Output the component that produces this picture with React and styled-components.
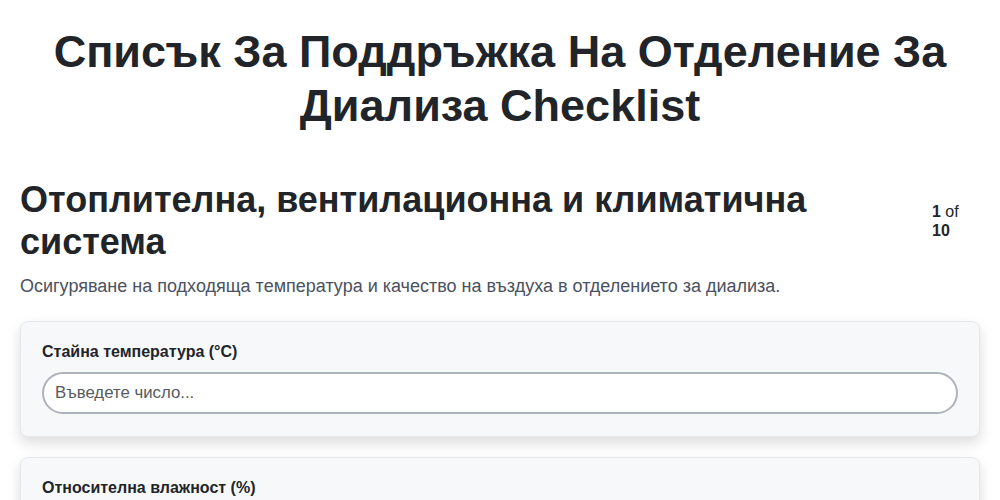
import React from 'react';
import styled, { createGlobalStyle } from 'styled-components';

const GlobalStyle = createGlobalStyle`
  body {
    margin: 0;
    background: #ffffff;
    font-family: "Liberation Sans", Arial, sans-serif;
    color: #212529;
  }
`;

const Page = styled.div`
  padding: 25px 20px 20px;
`;

const Title = styled.h1`
  margin: 0 0 46px;
  font-size: 45px;
  line-height: 54px;
  font-weight: 700;
  text-align: center;
  color: #212529;
`;

const SectionHeader = styled.div`
  display: flex;
  align-items: center;
  margin-bottom: 11px;
`;

const SectionTitle = styled.h2`
  flex: 1;
  margin: 0;
  font-size: 36px;
  line-height: 42px;
  font-weight: 700;
  color: #212529;
  padding-right: 40px;
`;

const Counter = styled.div`
  width: 48px;
  font-size: 16px;
  line-height: 19px;
  color: #212529;
  b {
    font-weight: 700;
  }
`;

const Description = styled.p`
  margin: 0 0 23px;
  font-size: 18px;
  line-height: 24px;
  color: #4a5160;
`;

const Card = styled.div`
  background: #f7f8fa;
  border: 1px solid #e6e8ec;
  border-radius: 8px;
  padding: 20px 21px 22px;
  margin-bottom: 20px;
  box-shadow: 0 6px 14px rgba(0, 0, 0, 0.14);
`;

const Label = styled.label`
  display: block;
  font-size: 16px;
  line-height: 20px;
  font-weight: 700;
  color: #212529;
  margin-bottom: 10px;
`;

const Input = styled.input`
  display: block;
  width: 100%;
  box-sizing: border-box;
  height: 42px;
  padding: 0 11px;
  border: 2px solid #adb3bb;
  border-radius: 21px;
  background: #ffffff;
  font-family: "Liberation Sans", Arial, sans-serif;
  font-size: 16.8px;
  color: #212529;
  outline: none;
  &::placeholder {
    color: #555a61;
  }
`;

const fields = [
  { label: 'Стайна температура (°C)' },
  { label: 'Относителна влажност (%)' },
];

const App = () => {
  return (
    <Page>
      <GlobalStyle />
      <Title>Списък За Поддръжка На Отделение За Диализа Checklist</Title>
      <SectionHeader>
        <SectionTitle>Отоплителна, вентилационна и климатична система</SectionTitle>
        <Counter>
          <b>1</b> of <b>10</b>
        </Counter>
      </SectionHeader>
      <Description>
        Осигуряване на подходяща температура и качество на въздуха в отделението за диализа.
      </Description>
      {fields.map((f, i) => (
        <Card key={i}>
          <Label>{f.label}</Label>
          <Input type="text" placeholder="Въведете число..." />
        </Card>
      ))}
    </Page>
  );
};

export default App;
